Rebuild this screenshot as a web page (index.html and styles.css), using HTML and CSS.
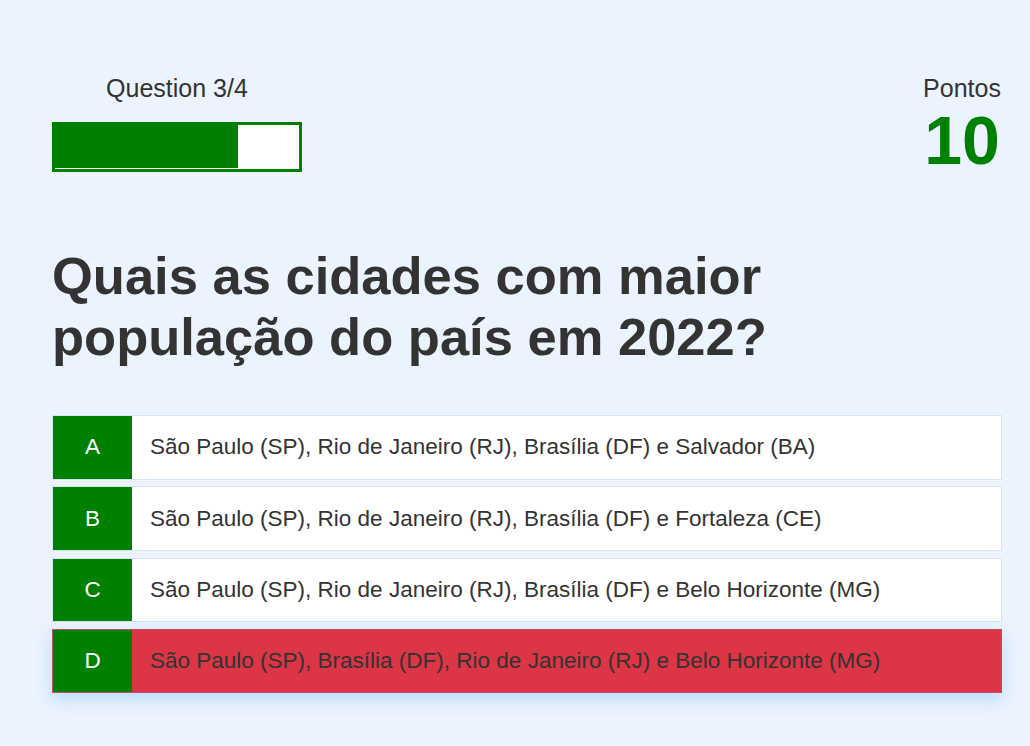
FILE: index.html
```html
<!DOCTYPE html>
<html lang="pt">
<head>
<meta charset="utf-8">
<title>Quiz</title>
<link rel="stylesheet" href="styles.css">
</head>
<body>
<main class="quiz">
  <header class="hud">
    <div class="progress-col">
      <p class="progress-label">Question 3/4</p>
      <div class="progress-bar"><div class="progress-fill" style="width: 75%"></div></div>
    </div>
    <div class="score-col">
      <p class="score-label">Pontos</p>
      <p class="score-value">10</p>
    </div>
  </header>
  <h1 class="question">Quais as cidades com maior população do país em 2022?</h1>
  <ul class="options">
    <li class="option"><span class="letter">A</span><span class="answer">São Paulo (SP), Rio de Janeiro (RJ), Brasília (DF) e Salvador (BA)</span></li>
    <li class="option"><span class="letter">B</span><span class="answer">São Paulo (SP), Rio de Janeiro (RJ), Brasília (DF) e Fortaleza (CE)</span></li>
    <li class="option"><span class="letter">C</span><span class="answer">São Paulo (SP), Rio de Janeiro (RJ), Brasília (DF) e Belo Horizonte (MG)</span></li>
    <li class="option option-wrong"><span class="letter">D</span><span class="answer">São Paulo (SP), Brasília (DF), Rio de Janeiro (RJ) e Belo Horizonte (MG)</span></li>
  </ul>
</main>
</body>
</html>
```
FILE: styles.css
```css
* { box-sizing: border-box; }
html, body { margin: 0; padding: 0; }
body {
  background: #ebf3fe;
  font-family: "Liberation Sans", Arial, sans-serif;
  color: #333;
  height: 746px;
  overflow: hidden;
}
.quiz {
  width: 950px;
  margin-left: 52px;
  padding-top: 74px;
}
.hud {
  display: flex;
  justify-content: space-between;
  align-items: flex-start;
}
.progress-col { width: 250px; }
.progress-label {
  margin: 0;
  font-size: 25px;
  line-height: 28px;
  text-align: center;
}
.progress-bar {
  margin-top: 20px;
  height: 50px;
  border: 3px solid #008000;
  background: #fff;
}
.progress-fill {
  height: 43px;
  background: #008000;
}
.score-col {
  width: 80px;
  text-align: center;
}
.score-label {
  margin: 0;
  font-size: 25px;
  line-height: 28px;
}
.score-value {
  margin: 0;
  font-size: 68px;
  font-weight: bold;
  line-height: 76px;
  color: #008000;
}
.question {
  margin: 67px 0 0;
  width: 800px;
  font-size: 52.5px;
  line-height: normal;
  font-weight: bold;
  color: #333;
}
.options {
  list-style: none;
  margin: 48px 0 0;
  padding: 0;
  display: flex;
  flex-direction: column;
  gap: 6.8px;
}
.option {
  display: flex;
  align-items: stretch;
  height: 64.5px;
  background: #fff;
  border: 1px solid #d3e5f7;
  font-size: 22.5px;
}
.letter {
  width: 79px;
  flex: none;
  background: #008000;
  color: #fff;
  display: flex;
  align-items: center;
  justify-content: center;
}
.answer {
  display: flex;
  align-items: center;
  padding-left: 18px;
}
.option-wrong {
  background: #dc3545;
  border-color: #c14c6c;
  box-shadow: 0 6px 16px rgba(120, 190, 245, 0.45);
}
```
